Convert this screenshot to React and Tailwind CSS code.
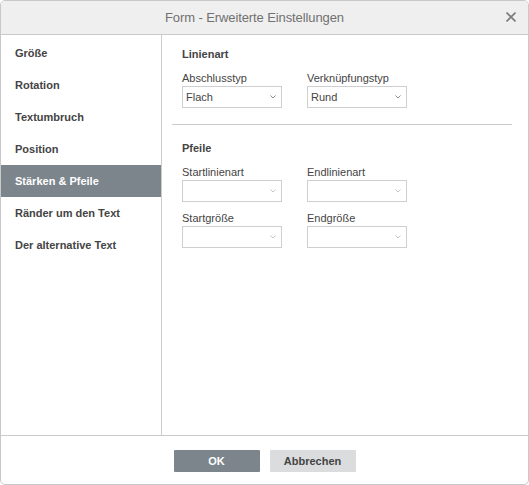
const categories = [
  'Größe',
  'Rotation',
  'Textumbruch',
  'Position',
  'Stärken & Pfeile',
  'Ränder um den Text',
  'Der alternative Text',
]

function Chevron({ muted }) {
  return (
    <svg width="6" height="4" viewBox="0 0 6 4" className="shrink-0">
      <polyline
        points="0.5,0.5 3,3 5.5,0.5"
        fill="none"
        stroke={muted ? '#c4c4c4' : '#8a8a8a'}
        strokeWidth="1"
      />
    </svg>
  )
}

function Combo({ value, muted }) {
  return (
    <div className="flex h-[22px] w-[100px] items-center justify-between border border-[#cfcfcf] bg-white pl-[3px] pr-[5px]">
      <span className="text-[11px] leading-[13px] text-[#444]">{value}</span>
      <Chevron muted={muted} />
    </div>
  )
}

function Field({ label, value, muted }) {
  return (
    <div className="w-[100px]">
      <div className="mb-px h-[13px] text-[11px] leading-[13px] text-[#444]">{label}</div>
      <Combo value={value} muted={muted} />
    </div>
  )
}

export default function App() {
  const aktiv = 'Stärken & Pfeile'

  return (
    <div className="h-[485px] w-[529px] bg-white font-['Liberation_Sans',Arial,sans-serif]">
      <div className="flex h-full w-full flex-col overflow-hidden rounded-[5px] border border-[#c8c8c8]">
        <div className="relative flex h-[34px] shrink-0 items-center justify-center border-b border-[#cbcbcb] bg-[#efefef] pr-[20px]">
          <span className="text-[13px] leading-[15px] tracking-[-0.1px] text-[#717171]">
            Form - Erweiterte Einstellungen
          </span>
          <svg
            width="10"
            height="10"
            viewBox="0 0 10 10"
            className="absolute right-[12px] top-[11px]"
          >
            <path d="M0.5 0.5 L9.5 9.5 M9.5 0.5 L0.5 9.5" stroke="#7c7c7c" strokeWidth="1.6" />
          </svg>
        </div>

        <div className="flex h-[400px] shrink-0">
          <div className="w-[161px] shrink-0 border-r border-[#cbcbcb] pt-[2px]">
            {categories.map((c) => (
              <div
                key={c}
                className={
                  'flex h-[32px] items-center pl-[14px] text-[11px] font-bold leading-[13px] ' +
                  (c === aktiv ? 'bg-[#7d858c] text-white' : 'text-[#444]')
                }
              >
                {c}
              </div>
            ))}
          </div>

          <div className="flex-1 pl-[20px] pr-[16px] pt-[13px]">
            <div className="h-[13px] text-[11px] font-bold leading-[13px] text-[#444]">Linienart</div>
            <div className="mt-[11px] flex gap-[25px]">
              <Field label="Abschlusstyp" value="Flach" />
              <Field label="Verknüpfungstyp" value="Rund" />
            </div>

            <div className="ml-[-10px] mt-[16px] h-px bg-[#cbcbcb]" />

            <div className="mt-[17px] h-[13px] text-[11px] font-bold leading-[13px] text-[#444]">Pfeile</div>
            <div className="mt-[11px] flex gap-[25px]">
              <Field label="Startlinienart" muted />
              <Field label="Endlinienart" muted />
            </div>
            <div className="mt-[10px] flex gap-[25px]">
              <Field label="Startgröße" muted />
              <Field label="Endgröße" muted />
            </div>
          </div>
        </div>

        <div className="flex flex-1 justify-center gap-[10px] border-t border-[#cbcbcb] pt-[14px]">
          <button className="h-[22px] w-[86px] rounded-[1px] bg-[#7d858c] text-[11px] font-bold text-white">
            OK
          </button>
          <button className="h-[22px] w-[86px] rounded-[1px] bg-[#dadcde] text-[11px] font-bold text-[#444]">
            Abbrechen
          </button>
        </div>
      </div>
    </div>
  )
}
